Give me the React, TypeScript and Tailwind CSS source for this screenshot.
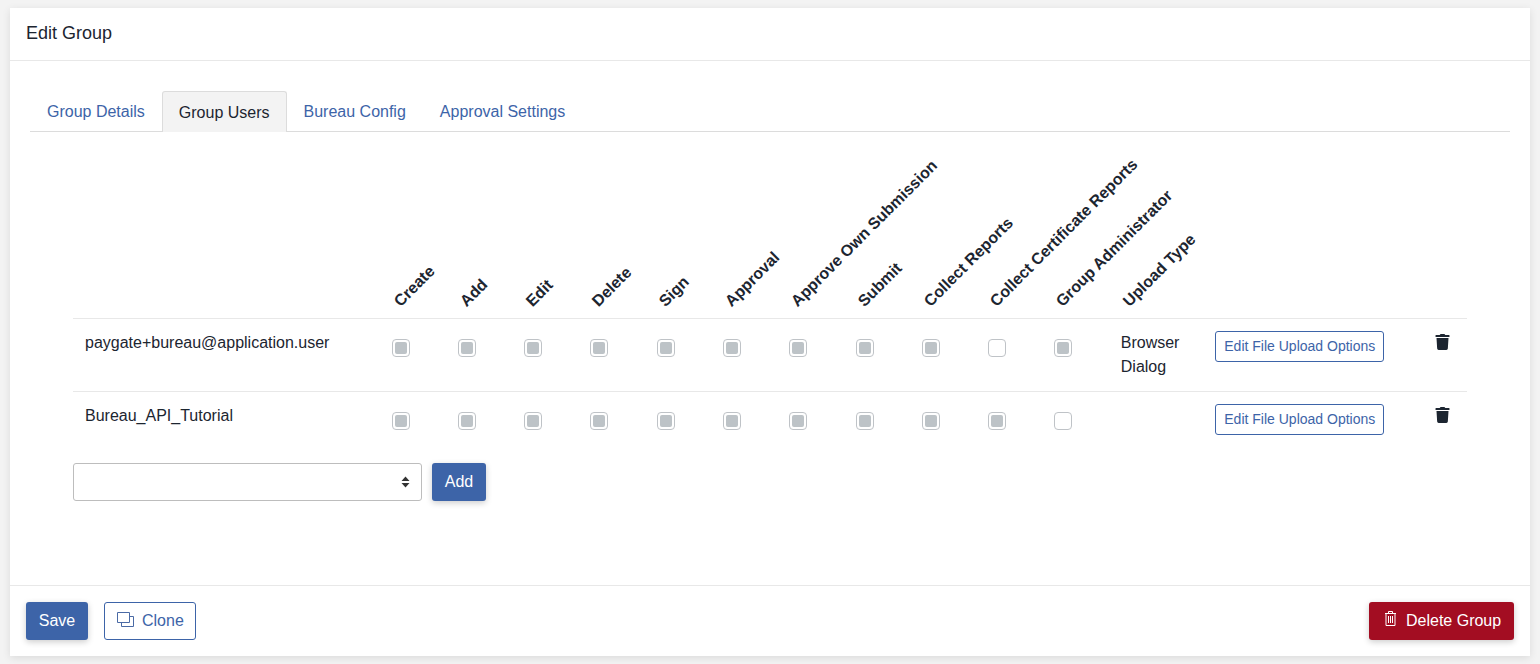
import { FaTrash } from "react-icons/fa";

const perms = ["Create", "Add", "Edit", "Delete", "Sign", "Approval", "Approve Own Submission", "Submit", "Collect Reports", "Collect Certificate Reports", "Group Administrator"];

const users = [
  { name: "paygate+bureau@application.user", checks: [1, 1, 1, 1, 1, 1, 1, 1, 1, 0, 1], upload: ["Browser", "Dialog"] },
  { name: "Bureau_API_Tutorial", checks: [1, 1, 1, 1, 1, 1, 1, 1, 1, 1, 0], upload: [] },
];

function Check({ on }: { on: boolean }) {
  return (
    <div className="w-[18px] h-[18px] rounded-[4px] border border-[#bfc3c7] bg-white flex items-center justify-center">
      {on && <div className="w-[12px] h-[12px] rounded-[2px] bg-[#bdc3c7]" />}
    </div>
  );
}

function RotatedHead({ label }: { label: string }) {
  return (
    <th className="p-0 align-bottom text-left font-bold">
      <div className="relative h-[40px]">
        <span className="absolute left-[24px] bottom-[7px] origin-bottom-left -rotate-45 whitespace-nowrap leading-[20px]">{label}</span>
      </div>
    </th>
  );
}

export default function App() {
  return (
    <div className="h-[664px] bg-[#f3f3f3] pt-2 px-[10px] overflow-hidden font-['Liberation_Sans',Arial,sans-serif] text-[16px] text-[#1c2530]">
      <div className="bg-white h-[648px] flex flex-col shadow-[0_2px_8px_rgba(0,0,0,0.1)]">
        {/* Header */}
        <div className="h-[53px] shrink-0 border-b border-[#e8e8e8] px-4 pb-[2px] flex items-center text-[18px]">Edit Group</div>

        {/* Body */}
        <div className="flex-1 pt-[30px] px-5">
          <div className="flex h-[41px] border-b border-[#dcdcdc] text-[#3d64a8] pl-px">
            <div className="pl-4 pr-[17px] pt-[9px]">Group Details</div>
            <div className="px-4 pt-[9px] h-[41px] bg-[#f3f3f3] border border-b-0 border-[#dcdcdc] rounded-t-[3px] text-[#1c2530]">Group Users</div>
            <div className="px-4 pt-[9px] ml-px">Bureau Config</div>
            <div className="px-[18px] pt-[9px]">Approval Settings</div>
          </div>

          <div className="pl-[43px] pr-[43px] pt-[146px]">
            <table className="w-[1394px] table-fixed border-collapse">
              <colgroup>
                <col className="w-[306.5px]" />
                {perms.map((p) => (
                  <col key={p} className="w-[66.3px]" />
                ))}
                <col className="w-[94.5px]" />
                <col className="w-[220px]" />
                <col />
              </colgroup>
              <thead>
                <tr>
                  <th className="p-0" />
                  {perms.map((p) => (
                    <RotatedHead key={p} label={p} />
                  ))}
                  <RotatedHead label="Upload Type" />
                  <th className="p-0" />
                  <th className="p-0" />
                </tr>
              </thead>
              <tbody>
                {users.map((u) => (
                  <tr key={u.name} className="border-t border-[#e8e8e8] h-[73px] align-top">
                    <td className="pl-3 pt-[12px] leading-[24px]">{u.name}</td>
                    {u.checks.map((c, i) => (
                      <td key={i} className="pl-3 pt-5">
                        <Check on={c === 1} />
                      </td>
                    ))}
                    <td className="pl-3 pt-[12px] leading-[24px]">
                      {u.upload.map((l) => (
                        <div key={l}>{l}</div>
                      ))}
                    </td>
                    <td className="pl-3 pt-3">
                      <button className="h-[31px] w-[169px] border border-[#3d64a8] rounded-[3px] text-[14px] text-[#3d64a8] bg-white">Edit File Upload Options</button>
                    </td>
                    <td className="pl-3 pt-[15px]">
                      <FaTrash className="w-[15px] h-[16px] text-[#1c2530]" />
                    </td>
                  </tr>
                ))}
              </tbody>
            </table>

            <div className="flex items-center gap-[10px] -mt-[2px]">
              <div className="relative w-[349px] h-[38px] border border-[#bdbdbd] rounded-[3px] bg-white">
                <svg className="absolute right-[11px] top-[12px]" width="9" height="12" viewBox="0 0 9 12">
                  <path d="M4.5 0.5 L8.5 5 H0.5 Z M4.5 11.5 L0.5 7 H8.5 Z" fill="#333" />
                </svg>
              </div>
              <button className="w-[54px] h-[38px] rounded-[3px] bg-[#3d64a8] text-white shadow-[0_2px_6px_rgba(0,0,0,0.2)]">Add</button>
            </div>
          </div>
        </div>

        {/* Footer */}
        <div className="h-[71px] shrink-0 border-t border-[#e8e8e8] px-4 pt-4 flex items-start">
          <button className="w-[62px] h-[38px] rounded-[3px] bg-[#3d64a8] text-white shadow-[0_2px_6px_rgba(0,0,0,0.2)]">Save</button>
          <button className="ml-4 w-[92px] h-[38px] rounded-[3px] border border-[#3d64a8] text-[#3d64a8] bg-white flex items-center pl-3 gap-2">
            <svg className="mb-[4px]" width="17" height="15" viewBox="0 0 17 15" fill="none" stroke="#4a6aa5" strokeWidth="1">
              <path d="M0.5 0.5 H12.5 V10.5 H0.5 Z" />
              <path d="M12.5 4.5 H16.5 V14.5 H4.5 V10.5" />
            </svg>
            Clone
          </button>
          <button className="ml-auto w-[145px] h-[38px] rounded-[3px] bg-[#a30d22] text-white flex items-center pl-4 gap-[10px] shadow-[0_2px_6px_rgba(0,0,0,0.2)]">
            <svg className="mb-[5px]" width="11" height="15" viewBox="0 0 11 15" fill="none" stroke="#fff" strokeWidth="1">
              <path d="M0 2.5 H11 M3.5 2.5 V0.5 H7.5 V2.5 M1 2.5 V14.5 H10 V2.5 M3.5 5 V12 M5.5 5 V12 M7.5 5 V12" />
            </svg>
            Delete Group
          </button>
        </div>
      </div>
    </div>
  );
}
